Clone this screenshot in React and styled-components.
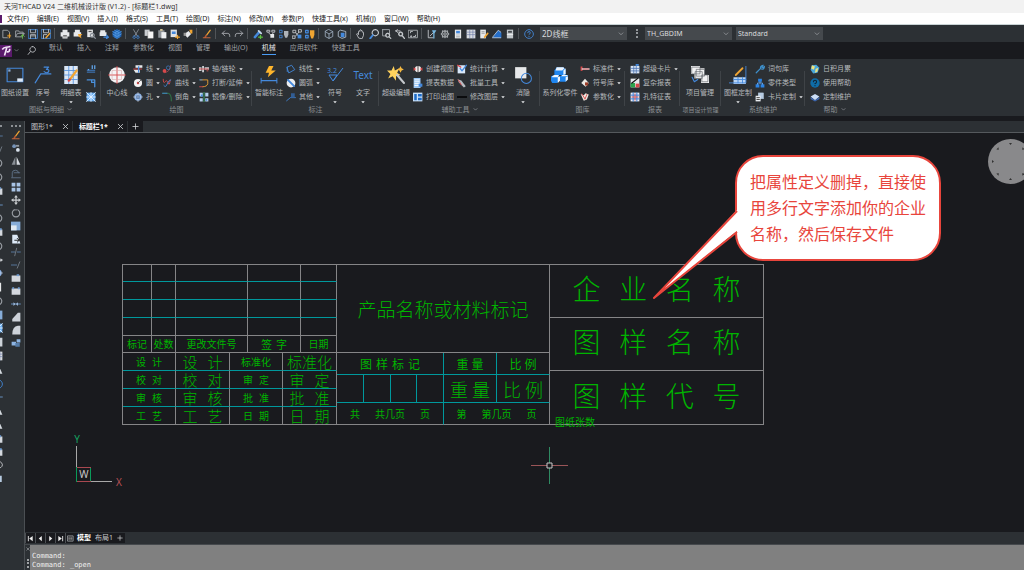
import React from 'react';
import styled, { createGlobalStyle } from 'styled-components';

const c = {
  dark: '#191a1e', bar: '#2c3034', field: '#45494d', text: '#b6b9bc', dim: '#8b8f93',
  blue: '#3b82d6', light: '#d5d8dc', red: '#e8453c', green: '#00b400', cyan: '#00989c', line: '#858587',
};
const sans = '"Noto Sans", "Noto Sans CJK SC", sans-serif';

const Global = createGlobalStyle`
  * { box-sizing: border-box; }
  body { margin: 0; background: ${c.dark}; font-family: ${sans}; overflow: hidden; }
  button { border: 0; padding: 0; background: none; color: inherit; font: inherit; display: flex; align-items: center; }
  svg { display: block; flex: none; }
`;

/* ---------- icons, all drawn on a 16 unit grid ---------- */
const L = ({ d, s = '#c3c7cb', w = 1.4, f = 'none' }) => (
  <path d={d} stroke={s} strokeWidth={w} fill={f} strokeLinecap="round" strokeLinejoin="round" />
);
const F = ({ d, f = '#e6e8ea' }) => <path d={d} fill={f} />;
const B = '#4489dc';
const O = '#f0a532';
const R = '#d8484a';

const glyphs = {
  newFile: <><L d="M2 2h7l3 3v9H2z" s="#a5a9ad" /><F d="M9 8h5v6H9z" f="#5a4322" /><L d="M12 8v6M9 11h5" s={O} /></>,
  openFile: <><L d="M1 12V3h5l1 2h6v3M1 12l3-5h11l-3 5z" s="#a0a5aa" /><L d="M9 12l3-3 3 3M12 9v6" s="#63b946" /></>,
  save: <><L d="M1 1h14v14H1z" s={B} /><L d="M4 1v5h8V1M4 15V9h8v6M5 11h6" s="#b3b8bd" /></>,
  saveAs: <><L d="M1 1h14v14H1z" s={B} /><L d="M4 1v5h8V1M4 15V9h5" /><L d="M8 14l6-7" s={O} w={2.4} /></>,
  print: <><F d="M4 1h8v4H4zM1 5h14v7h-3v3H4v-3H1z" /><F d="M5 10h6v1H5zM5 12h6v1H5z" f="#555" /></>,
  printPick: <><F d="M3 1h8v4H3zM1 5h12v7H1z" /><F d="M8 8h7l-3 3 2 4-5-3z" f={O} /></>,
  preview: <><F d="M2 1h9v12H2z" /><F d="M4 3h5v2H4z" f="#555" /><L d="M10 7a3 3 0 1 0 .1 0M12 12l3 3" s="#8b9198" w={2} /></>,
  publish: <><F d="M2 2h8v3H2zM1 5h11v6H1z" /><L d="M8 13h7M12 10l3 3-3 2" s={B} w={2} /></>,
  mesh: <><F d="M8 0l7 4v8l-7 4-7-4V4z" f="#1d5fae" /><L d="M1 4l7 4 7-4M8 8v8M1 8l7 4 7-4M4 2l7 4v8M12 2L5 6v8" s="#65aef5" w={0.9} /></>,
  cut: <><L d="M4 1l6 10M12 1L6 11" s="#8d949b" /><L d="M5 11a2 2 0 1 0 .1 0M11 11a2 2 0 1 0 .1 0" s={B} /></>,
  copy: <><F d="M1 1h8v10H1z" f="#c9cdd1" /><F d="M6 4h9v11H6z" f="#f4f4f4" /><L d="M6 4v11" s="#777" w={0.7} /></>,
  paste: <><F d="M2 2h10v12H2z" f="#8d9297" /><F d="M5 0h4v3H5z" f="#d1c39a" /><F d="M7 5h8v10H7z" f="#eceef0" /></>,
  pasteBlk: <><F d="M1 1h10v12H1z" f="#dfe2e5" /><F d="M3 4h6v4H3z" f={B} /><L d="M9 13h6M12 10v5" s={O} w={2} /></>,
  match: <><F d="M2 8l7-5 4 5-6 6z" f="#e9ebed" /><F d="M10 1h5v6h-3z" f={O} /><F d="M1 6h4v5H1z" f="#999" /></>,
  brush: <><L d="M13 2L7 10" s={O} w={2} /><L d="M7 10l-2 3" s="#b65a32" w={2.5} /><L d="M2 14h11" s="#d66c3b" /></>,
  undo: <L d="M6 3L2 7l4 4M2 7h9q3 0 3 4v1" s="#a9adb1" />,
  redo: <L d="M10 3l4 4-4 4M14 7H5q-3 0-3 4v1" s="#a9adb1" />,
  pick: <><L d="M3 13l7-8" s={B} w={4} /><L d="M9 3l4 4" s="#c6d6ea" w={3} /><L d="M9 13h6M12 10v6" s="#5cbf3d" w={2} /></>,
  nodes: <><L d="M2 2h4v3H2zM10 2h4v3h-4zM4 6l4 4 4-4" /><F d="M7 8h6v6H7z" /></>,
  bulbOff: <><L d="M1 2h4v4H1zM1 10h4v4H1z" s={B} /><F d="M8 3h7v6l-2 5h-3L8 9z" f="#aeb3b8" /></>,
  nodes2: <><L d="M2 2h4v4H2zM11 1h4v4h-4zM1 11h4v4H1zM6 6l5 6M11 5l-5 6" /><F d="M9 9h6v6H9z" f={B} /></>,
  bulbOn: <><L d="M1 2h4v4H1zM1 10h4v4H1z" s={B} w={2} /><F d="M8 2h7v7l-2 6h-3L8 9z" f={O} /></>,
  cube: <L d="M8 1l6 3v8l-6 3-6-3V4zM2 4l6 4 6-4M8 8v7" s="#9aa9ba" />,
  cubes: <><L d="M6 2l8 2v9l-6 2-6-3V5z" s="#aebdcc" /><F d="M6 6h6v7H6z" f={B} /></>,
  pan: <L d="M4 14L1 8q1-2 3 1V4q1-2 2 0V2q2-2 2 0v1q2-2 2 1v1q2-1 2 1v4l-2 5z" s="#c1c4c8" />,
  zoom: <><L d="M10 1a5 5 0 1 0 .1 0" w={1.8} /><L d="M6 10l-4 5" s={B} w={3} /></>,
  zoomWin: <><L d="M1 1h11v8M1 1v10h6" s="#a8adb2" /><L d="M9 7a3 3 0 1 0 .1 0M11 12l3 3" w={2} /></>,
  zoomPrev: <><L d="M1 3h7M5 6L1 3l3-2" /><L d="M9 5a3 3 0 1 0 .1 0M11 10l4 5" w={2.2} /></>,
  extent: <><L d="M1 2h14v12H1z" s="#aeb2b6" /><L d="M4 6V4h3M12 10v2H9M5 11a1 1 0 1 0 .1 0" /></>,
  axes: <><L d="M2 2v12h8M5 11l5-5" /><F d="M8 2h7l-3 5v8h-2V7z" f="#78b7e0" /></>,
  gear: <L d="M8 2l1 2 3-1v3l2 2-2 2v3l-3-1-1 2-1-2-3 1v-3L2 8l2-2V3l3 1zM8 6a2 2 0 1 0 .1 0" s="#a2a6aa" w={1.8} />,
  doc: <><F d="M3 1h10v14H3z" /><F d="M5 3h6v4H5z" f={B} /><F d="M5 9h6v1H5zM5 12h6v1H5z" f="#8a8f94" /></>,
  table: <><F d="M1 1h14v14H1z" f="#d9dce0" /><L d="M1 5h14M1 9h14M6 1v14M11 1v14" s="#6170a0" w={0.9} /></>,
  note: <><F d="M2 1h9v14H2z" /><F d="M4 4h5v1H4zM4 7h5v1H4z" f="#777" /><L d="M9 13l5-6" s={O} w={2.5} /></>,
  tri: <><F d="M1 14L10 2l5 4v8z" f="#256ec8" /><L d="M1 13l9-11 4 3M1 14h13" s="#b8cde6" /></>,
  calc: <><F d="M3 1h10v14H3z" f="#c1c6ca" /><F d="M5 3h6v3H5z" f="#44484c" /><F d="M3 8h10v1H3z" f="#fff" /></>,
  help: <><L d="M8 1a7 7 0 1 0 .1 0" s={B} /><L d="M6 6q0-2 2-2t2 2-2 3M8 12v.2" s={B} /></>,
  frame: <><L d="M1 2h14v12H1z" s={B} w={1} /><F d="M10 11h5v3h-5z" f="#dbe8f7" /><F d="M2 3h2v2H2z" f="#8aa9cf" /></>,
  balloon: <><L d="M1 15l5-8h9" s={B} w={1} /><L d="M9 1h4L11 3q3 0 2 2t-4 0" s={B} w={1} /></>,
  sheet: <><F d="M2 0h12v16H2z" f="#dce8f7" /><L d="M2 4h12M2 8h12M2 12h12M6 0v16M10 0v16" s="#5b95dc" w={0.8} /><L d="M7 12l6-8" s={O} w={2} /><L d="M6 13l1-1" s={R} w={2} /></>,
  part1: <><L d="M2 10h12M2 13h12" s={B} /><F d="M9 2h2v6H9zM13 2h2v6h-2zM3 8h2v2H3z" f="#61a5ec" /></>,
  part2: <><L d="M2 3h12v11M9 3v4h5" s="#4a90dc" w={2} /></>,
  part3: <><F d="M1 1h14v14H1z" f="#6fb2f4" /><L d="M1 1l14 14M15 1L1 15M8 1v14M1 8h14" s="#e7f2ff" /></>,
  center: <><circle cx="8" cy="8" r="7" fill="#f3f4f6" /><L d="M8 0v16M0 8h16" s={R} w={0.8} /><L d="M4 4h8v8H4z" s="#d8a5a5" w={0.5} /></>,
  line: <><F d="M4 2h11v4H4zM1 9h10v5H4z" /><L d="M1 8h13" s={R} /><L d="M9 4v9" s={B} w={2} /></>,
  circle: <><circle cx="8" cy="8" r="6.5" fill="#f3f3f4" /><circle cx="8" cy="8" r="2" fill={R} /><L d="M8 8l5-5" s="#555" /></>,
  hole: <><circle cx="8" cy="8" r="6" fill="#8fb3e4" /><circle cx="8" cy="8" r="3" fill="#2e568e" /><L d="M8 0v16M0 8h16" s="#d6deea" w={0.9} /></>,
  arc: <><L d="M14 2q-1 11-10 12" s="#9b4a50" /><circle cx="4" cy="11" r="3" fill={R} /><circle cx="10" cy="6" r="3" fill="none" stroke={B} /></>,
  curve: <><L d="M2 2q0 8 3 4t5 2 3-5" s={R} /><L d="M3 12q3 4 5-2t6-7" s={B} /></>,
  fillet: <><L d="M1 2h9q5 1 5 12" s="#2f6b44" w={2} /><L d="M1 2h7" s={B} /></>,
  shaft: <><F d="M0 5h4v6H0zM5 3h3v10H5zM9 5h7v4H9z" f="#c9ccd0" /><L d="M0 8h15" s={R} /><F d="M12 9h3v3h-3z" f="#8a4545" /></>,
  breakIc: <><L d="M2 3h12v6q-1 5-8 5" s={O} /><L d="M1 3h4" s={B} /><L d="M6 14H1" s={R} /></>,
  mirror: <><F d="M1 1h5v6H1zM10 1h5v6h-5zM1 10h5v5H1zM10 10h5v5h-5z" f="#b4d0ee" /><L d="M8 0v16" s="#40b070" /><F d="M3 4h3v3H3zM11 11h2v3h-2z" f={B} /></>,
  smart: <><F d="M8 0h4l-2 4h4L7 10l1-4H5z" f="#ffb52b" /><L d="M1 11v4M15 11v4M1 13h14" s={B} w={0.9} /></>,
  linear: <><L d="M2 5l7-3 5 7-9 5zM2 5v7" s={B} /></>,
  dia: <><circle cx="8" cy="8" r="7" fill="#eceef0" /><L d="M3 3l10 10" s={B} w={3} /></>,
  other: <><L d="M1 14l6-5h8" s={B} /><F d="M8 2h6v7H8z" f="#315d94" /></>,
  wand: <><F d="M6 0l1 4 4-2-2 4 3 2-4 1v4L5 9l-4 2 2-4L0 4l4 0z" f="#ffd25c" /><F d="M12 0l1 2 2 1-2 1-1 2-1-2-2-1 2-1z" f="#f5b942" /><L d="M9 8l6 7" s="#c5c8cc" w={2} /></>,
  view: <><circle cx="8" cy="8" r="5" fill="#f4eeee" /><F d="M1 5l4 3-4 3zM15 5l-4 3 4 3z" f={R} /><L d="M8 2v12" s="#333" /></>,
  extract: <><F d="M1 0h11v16H1z" f="#9cc7f4" /><L d="M3 3h7M3 6h7M3 9h7M3 12h7" s="#fff" /><F d="M9 9h6v5H9z" f={B} /></>,
  plot: <><F d="M0 1h15v14H0z" f="#cae2fb" /><F d="M2 3h4v10H2zM8 3h6v4H8zM8 9h6v4H8z" f="#1e6cc8" /></>,
  stat: <><F d="M1 2h12v13H1z" f="#d9e8fa" /><L d="M5 7l3 4 7-9" s={B} w={2} /><L d="M1 2l5 3" s={R} w={2} /></>,
  batch: <><F d="M1 2l6 2 7 9-3 2-8-8z" f="#b7bcc2" /><L d="M2 3l5 8" s={R} /></>,
  dash: <L d="M0 8h16" s="#0b0c0e" w={3} />,
  hide: <><F d="M1 1h10v10H1z" f="#e7e8ea" /><circle cx="11" cy="11" r="4.5" fill="none" stroke={B} strokeWidth="0.9" /></>,
  blocks: <>
    <F d="M5 1h6l2 2v5H3V4z" f="#1f86f0" /><F d="M0 9l3-1h4v6l-2 1H1L0 13z" f="#1f86f0" /><F d="M8 9l2-1h5v4l-2 2H8z" f="#1f86f0" />
    <F d="M5 1h6l1 1-2 2H4zM11 4l2-2v5l-2 1zM1 9l2-1h4l-1 2H1zM6 10l2-1v4l-2 2zM9 9l1-1h5l-1 1zM13 10l2-1v3l-2 2z" f="#eef5fd" />
  </>,
  bolt: <><F d="M1 4h3v7H1z" f={R} /><L d="M4 8h10" s="#c5c8cc" w={3} /><L d="M5 8h9" s={R} /></>,
  symbol: <><F d="M8 1l6 7-5 6-7-6z" f="#ece9e4" /><F d="M8 7h5v5H8z" f="#9c3d28" /></>,
  param: <><F d="M1 3l5 2 3-3 5 2-3 8-5 2z" f="#eee9e1" /><L d="M3 3l5 8M11 4l-3 7" s={R} /></>,
  card: <><F d="M1 3h14v12H1z" f="#d9e5f5" /><L d="M1 7h14M1 11h14M6 3v12M10 3v12" s="#476fae" w={1.2} /><F d="M9 0h5v3H9z" f={B} /></>,
  report: <><F d="M1 1h14v14H1z" f="#e6e9ed" /><F d="M1 8h7v7H1z" f="#2da44d" /><F d="M9 9h6v6H9z" f={R} /><L d="M3 8L12 1" s="#111" w={2} /></>,
  feature: <><F d="M1 1h14v14H1z" f="#e9effa" /><L d="M1 5h14M1 11h14M5 1v14M11 1v14" s="#3f7dd0" w={1.6} /><L d="M8 3v10M3 8h10" s={R} /></>,
  project: <>
    <F d="M0 0h8v7H0zM5 2h7v7H5zM3 5h7v6H3zM9 8h7v7H9z" f="#f2f2f3" />
    <L d="M1 1h7v6H1zM5 3h7v6H5zM4 5h6v6H4zM10 8h5v6h-5z" s="#63676b" w={0.6} /><L d="M1 10l2 4 3-2" s={B} w={1} />
  </>,
  custom: <><F d="M4 10h11v6H4z" f="#b8d4f5" /><L d="M0 15h15V0M4 12h11M8 10v5M12 10v5" s={B} w={0.8} /><L d="M6 8l6-6" s={O} w={1.6} /></>,
  wrench: <L d="M2 14l7-7q-1-4 4-5l-2 3 2 1 2-2q0 5-5 4" s="#3e8fca" w={2} />,
  types: <><F d="M5 1h6v5H5zM1 10h6v5H1zM9 10h6v5H9z" f="#2b83e5" /><L d="M8 6v2M4 10V8h8v2" s="#69adf4" /></>,
  cardSet: <><F d="M5 1h9v10H5z" f="#b7cbe1" /><F d="M1 6h8v9H1z" f="#e9ecf0" /><L d="M3 9h4M3 12h4" s="#333" /></>,
  tip: <><F d="M3 2l7-1 5 5-3 8-7 1-4-6z" f="#49a6d9" /><F d="M3 2l5 2-2 5-4-2zM9 8l4-2-1 6-4 2z" f="#eee17b" /></>,
  helpFill: <><circle cx="8" cy="8" r="7.5" fill="#0f6da8" /><L d="M5.500 6q0-2.500 2.500-2.500T10.500 6 8 9M8 12v.3" s="#112636" w={1.8} /></>,
  book: <><F d="M1 7l7-4 7 4-7 6z" f="#c9dcf5" /><F d="M1 8l7 5 7-5v3l-7 4-7-4z" f="#3d68b3" /></>,
  mCopy: <><circle cx="5" cy="5" r="3" fill="#7693b8" /><circle cx="11" cy="11" r="3" fill="#d9e2ec" /><F d="M8 3h5v3H8z" f="#90979e" /></>,
  mMirror: <><F d="M7 1v13H1z" f="#888e95" /><F d="M9 1v13h6z" f="#d5dae0" /></>,
  mOffset: <><L d="M1 14h14M2 13V6q0-4 5-4t5 4M5 6h9" s="#60738a" /></>,
  mArray: <F d="M1 1h6v6H1zM9 1h6v6H9zM1 9h6v6H1zM9 9h6v6H9z" f="#a9c4e6" />,
  mMove: <F d="M8 0l3 4H9v3h3V5l4 3-4 3V9H9v3h2l-3 4-3-4h2V9H4v2L0 8l4-3v2h3V4H5z" f="#c9ccd0" />,
  mRotate: <><L d="M5 3a6 6 0 1 0 6 0" s="#9a9fa5" w={1.8} /><L d="M5 3h4" s="#9a9fa5" /></>,
  mScale: <><F d="M0 1h15v14H0z" f="#86acd8" /><F d="M0 7h9v8H0z" f="#dfe8f2" /></>,
  mStretch: <><F d="M2 1h8l5 14H2z" f="#dce9f7" /><L d="M6 10h7M10 7l3 3-3 3" s="#111" /></>,
  mTrim: <><L d="M0 8h6M10 8h5" s="#5b7fa8" /><L d="M9 2l-3 12" s="#77808a" /></>,
  mExtend: <><L d="M0 8h9" s="#5b7fa8" /><L d="M14 3l-4 10" s="#77808a" /></>,
  mBox: <><F d="M1 4h14v10H1z" f="#d4d8de" /><F d="M9 2h4v3H9z" f="#6f9bd0" /></>,
  mBox2: <><F d="M1 4h14v10H1z" f="#d4d8de" /><F d="M2 2h3v3H2zM11 2h3v3h-3z" f="#6f9bd0" /></>,
  mJoin: <><L d="M0 8h15" s="#6f9bd0" /><F d="M4 5l3 3-3 3zM11 5L8 8l3 3z" f="#a5c1e4" /></>,
  mCham: <F d="M2 15V11L11 1h4v14z" f="#cdd2d9" />,
  mFil: <F d="M2 15Q2 2 11 1h4v14z" f="#cdd2d9" />,
  mExpl: <><F d="M1 6h7v6H1zM9 2h6v5H9z" f="#8db4e2" /><F d="M7 8h7v6H7z" f="#567ca8" /></>,
  close: <L d="M3 3l10 10M13 3L3 13" s="#c4c7ca" w={2} />,
  plus: <L d="M8 2v12M2 8h12" s="#d5d7da" w={1.8} />,
  first: <F d="M2 2h2v12H2zM13 2v12L5 8z" f="#eee" />,
  prev: <F d="M11 2v12L4 8z" f="#eee" />,
  next: <F d="M5 2v12l7-6z" f="#eee" />,
  last: <F d="M12 2h2v12h-2zM3 2v12l8-6z" f="#eee" />,
  list: <><L d="M2 2h12v12H2z" /><L d="M5 5h6v6H5zM5 8h6" s="#999" /></>,
  chevron: <L d="M3 5l5 5 5-5" s="#a6aaae" w={1.8} />,
  drop: <F d="M1 5h14L8 13z" f="#e8eaec" />,
  search: <L d="M10 1a5 5 0 1 0 .1 0M6 10l-4 5" s="#c6c9cc" w={1.5} />,
  logo: <><F d="M0 0h16v16H0z" f="#5a1a6b" /><path d="M3 6q2-3 5-3t6-1M9 4L6 14M9 9q4 1 4-4" stroke="#f3e5f7" strokeWidth="2.2" fill="none" /></>,
};

const Icon = ({ name, size = 10 }) => (
  <svg width={size} height={size} viewBox="0 0 16 16" aria-hidden="true">{glyphs[name]}</svg>
);

/* ---------- frame ---------- */
const Page = styled.div`min-height: 100vh; display: flex; flex-direction: column; font-size: 7px; line-height: 10px; color: ${c.text};`;
const TitleBar = styled.header`height: 13px; padding: 2px 4px; background: #f2f2f2; color: #333; white-space: nowrap;`;
const MenuBar = styled.nav`
  height: 12px; padding-left: 7px; display: flex; align-items: center; gap: 8px;
  background: #fff; color: #222; border-bottom: 1px solid #c9d3d5; white-space: nowrap; position: relative;
`;
const AppMark = styled.span`position: absolute; left: 0; top: 2px; width: 2px; height: 8px; background: #5a1a6b;`;
const QuickBar = styled.div`height: 17px; display: flex; align-items: center; background: ${c.bar};`;
const ToolGroup = styled.div`display: flex; & + &::before { content: ''; width: 1px; height: 11px; margin: 1px 3px 0 2px; background: #505458; }`;
const ToolButton = styled.button`width: 13px; height: 13px; justify-content: center;`;
const SelectWrap = styled.label`position: relative; width: ${(p) => p.$w}px; margin-left: ${(p) => p.$gap}px; & > svg { position: absolute; right: 3px; top: 4px; }`;
const Select = styled.select`
  appearance: none; display: block; width: 100%; height: 13px; border: 0; border-radius: 0; padding: 0 2px;
  background: ${c.field}; color: #d9dbdd; font: ${(p) => p.$size}px/13px ${sans};
`;
const Grip = styled.span`width: 0; height: 9px; margin-left: 9px; border-left: 2px dotted #92969a;`;

const TabBar = styled.nav`height: 17px; display: flex; align-items: flex-start; background: ${c.dark};`;
const Brand = styled.button`width: 25px; height: 17px; gap: 2px; `;
const SearchButton = styled.button`width: 24px; height: 17px; padding-left: 2px;`;
const TabList = styled.div`display: flex; gap: 14px; white-space: nowrap;`;
const RibbonTab = styled.button`
  height: 13px; line-height: 12px; color: ${(p) => (p.$on ? '#e6e7e8' : '#a0a3a6')};
  border-bottom: 1px solid ${(p) => (p.$on ? '#4a9cf5' : 'transparent')};
`;

const Ribbon = styled.div`height: 57px; display: flex; background: ${c.bar}; white-space: nowrap;`;
const Group = styled.section`
  display: flex; flex-direction: column; position: relative; padding-left: ${(p) => p.$pad || 0}px;
  &:not(:last-child)::after { content: ''; position: absolute; right: 0; top: 12px; height: 35px; width: 1px; background: #3f4347; }
`;
const GroupBody = styled.div`height: 45px; padding-top: 3px; padding-right: 1px; display: flex;`;
const GroupName = styled.div`display: flex; justify-content: center; align-items: center; gap: 3px; height: 11px; color: ${c.dim}; font-size: ${(p) => (p.$tight ? 6 : 7)}px;`;
const BigButton = styled.button`
  width: ${(p) => p.$w}px; flex-direction: column; justify-content: flex-start; padding-top: 3px; gap: 3px; line-height: 9px;
`;
const BigArt = styled.span`height: 20px; display: flex; align-items: center; color: ${B}; font-size: 10px;`;
const Column = styled.div`width: ${(p) => p.$w}px; display: flex; flex-direction: column;`;
const SmallButton = styled.button`height: 14px; gap: 3px;`;

const RibbonEdge = styled.div`height: 5px; background: ${c.dark};`;

const Workspace = styled.div`flex: 1; display: flex; min-height: 0;`;
const Dock = styled.aside`width: 25px; display: flex; justify-content: space-between; background: ${c.bar}; border-right: 1px solid #4b4f53; padding: 4px 3px 0 0;`;
const Tools = styled.div`
  display: flex; flex-direction: column; justify-content: space-between; align-items: flex-end; overflow: hidden;
  width: ${(p) => p.$w}px; height: ${(p) => p.$h}px;
`;
const DockGrip = styled.span`width: 100%; height: 2px; border-top: 2px dotted #8d9195;`;
const Pane = styled.main`flex: 1; min-width: 0; display: flex; flex-direction: column;`;
const DocTabs = styled.div`height: 12px; display: flex; gap: 1px; background: ${c.bar}; border-bottom: 1px solid #55595d;`;
const DocTab = styled.button`
  height: 11px; padding: 0 3px 0 6px; gap: 9px; background: ${c.dark}; color: ${(p) => (p.$on ? '#fff' : '#c8cacc')};
  font-weight: ${(p) => (p.$on ? 700 : 400)};
`;
const AddTab = styled.button`width: 15px; height: 11px; justify-content: center; background: ${c.dark};`;

/* ---------- drawing ---------- */
const Canvas = styled.div`flex: 1; position: relative; overflow: hidden; background: ${c.dark};`;
const Placed = styled.div`position: absolute; left: ${(p) => p.$x}px; top: ${(p) => p.$y}px;`;
const TitleBlock = styled(Placed)`
  display: flex; border-left: 1px solid ${c.line}; border-top: 1px solid ${c.line};
  color: ${c.green}; font-family: "Noto Sans CJK SC", sans-serif; white-space: nowrap;
`;
const Sheet = styled.div`display: grid; grid-template-columns: ${(p) => p.$cols}; grid-template-rows: ${(p) => p.$rows || 'none'};`;
const Cell = styled.div`
  display: flex; align-items: center; justify-content: center; line-height: 1; font-size: ${(p) => p.$size || 11}px;
  font-weight: ${(p) => (p.$size > 12 ? 300 : 400)}; padding-bottom: ${(p) => (p.$size > 20 ? 6 : 0)}px;
  border-right: 1px solid ${(p) => (p.$r ? c.cyan : c.line)}; border-bottom: 1px solid ${(p) => (p.$b ? c.cyan : c.line)};
`;
const SpreadBox = styled.span`display: flex; justify-content: space-between; width: ${(p) => p.$w}px;`;
const Spread = ({ w, children }) => <SpreadBox $w={w}>{[...children].map((ch, i) => <span key={i}>{ch}</span>)}</SpreadBox>;
const Overhang = styled.span`position: absolute; right: 169px; bottom: -3px; font-size: 10px; line-height: 12px;`;
const Words = styled.span`display: flex; gap: ${(p) => p.$gap}px;`;

const Bubble = styled(Placed)`
  padding: 11px 12px 13px 13px; border: 2px solid ${c.red}; border-radius: 28px; background: #fff; color: ${c.red};
  font: 400 16px/26px "Noto Sans CJK SC", sans-serif; white-space: nowrap; width: 206px;
`;
const Compass = styled.div`position: absolute; right: -9px; top: 6px;`;

const LayoutTabs = styled.div`height: 12px; display: flex; align-items: center; background: ${c.bar};`;
const NavButton = styled.button`width: 10px; height: 10px; justify-content: center; background: ${c.dark}; border-left: 1px solid #4b4f53;`;
const LayoutTab = styled.button`height: 10px; padding: 0 2px; background: ${c.dark}; color: ${(p) => (p.$on ? '#fff' : '#c8cacc')}; font-weight: ${(p) => (p.$on ? 700 : 400)};`;
const Command = styled.div`height: 26px; display: flex; background: ${c.bar}; border-top: 1px solid #45494d;`;
const CommandSide = styled.div`width: 5px; display: flex; flex-direction: column; justify-content: space-between; align-items: center; padding: 2px 0;`;
const SideGrip = styled.span`height: 9px; border-left: 2px dotted #a0a3a6;`;
const Log = styled.div`flex: 1; padding: 7px 2px 0; background: #808080; color: #f0f0f0; font: 7px/9px "DejaVu Sans Mono", monospace;`;

const quick = [
  ['newFile', 'openFile', 'save', 'saveAs'],
  ['print', 'printPick', 'preview', 'publish', 'mesh'],
  ['cut', 'copy', 'paste', 'pasteBlk', 'match'],
  ['brush'], ['undo', 'redo'],
  ['pick', 'nodes', 'bulbOff', 'nodes2', 'bulbOn'],
  ['cube', 'cubes'],
  ['pan', 'zoom', 'zoomWin', 'zoomPrev', 'extent'],
  ['axes', 'gear', 'doc', 'table', 'note', 'tri', 'calc'],
  ['help'],
];
const menus = ['文件(F)', '编辑(E)', '视图(V)', '插入(I)', '格式(S)', '工具(T)', '绘图(D)', '标注(N)', '修改(M)', '参数(P)', '快捷工具(x)', '机械(J)', '窗口(W)', '帮助(H)'];
const tabs = ['默认', '插入', '注释', '参数化', '视图', '管理', '输出(O)', '机械', '应用软件', '快捷工具'];

const big = (w, icon, label, drop, text) => ({ w, icon, label, drop, text });
const col = (w, ...rows) => ({ w, rows });
const groups = [
  { name: '图纸与明细', more: true, items: [big(30, 'frame', '图纸设置'), big(26, 'balloon', '序号', true), big(30, 'sheet', '明细表', true), col(14, ['part1'], ['part2'], ['part3'])] },
  { name: '绘图', items: [big(32, 'center', '中心线'), col(29, ['line', '线', 1], ['circle', '圆', 1], ['hole', '孔', 1]), col(37, ['arc', '圆弧', 1], ['curve', '曲线', 1], ['fillet', '倒角', 1]), col(52, ['shaft', '轴/链轮', 1], ['breakIc', '打断/延伸', 1], ['mirror', '镜像/删除', 1])] },
  { name: '标注', items: [big(34, 'smart', '智能标注'), col(36, ['linear', '线性', 1], ['dia', '圆弧', 1], ['other', '其他', 1]), big(26, 'surf', '符号', true), big(30, null, '文字', true, 'Text')] },
  { name: '辅助工具', more: true, items: [big(34, 'wand', '超级编辑'), col(44, ['view', '创建视图'], ['extract', '提表数据'], ['plot', '打印出图', 1]), col(50, ['stat', '统计计算', 1], ['batch', '批量工具', 1], ['dash', '修改图层', 1]), big(32, 'hide', '消隐', true)] },
  { name: '图库', items: [big(40, 'blocks', '系列化零件'), col(44, ['bolt', '标准件', 1], ['symbol', '符号库', 1], ['param', '参数化', 1])] },
  { name: '报表', pad: 5, items: [col(49, ['card', '超级卡片', 1], ['report', '复杂报表'], ['feature', '孔特征表'])] },
  { name: '项目设计管理', tight: true, items: [big(40, 'project', '项目管理')] },
  { name: '系统维护', items: [big(34, 'custom', '图框定制', true), col(49, ['wrench', '词句库'], ['types', '零件类型'], ['cardSet', '卡片定制', 1])] },
  { name: '帮助', more: true, pad: 5, items: [col(48, ['tip', '日积月累'], ['helpFill', '使用帮助'], ['book', '定制维护'])] },
];

const modify = ['brush', 'mCopy', 'mMirror', 'mOffset', 'mArray', 'mMove', 'mRotate', 'mScale', 'mStretch', 'mTrim', 'mExtend', 'mBox', 'mBox2', 'mJoin', 'mCham', 'mFil', 'mExpl'];
const draw = ['mTrim', 'mExtend', 'mRotate', 'mRotate', 'mBox', 'mJoin', 'mRotate', 'mBox2', 'mRotate', 'mMove', 'hole', 'doc', 'mRotate', 'mScale', 'part3', 'mFil', 'table', 'mMirror', 'help', 'mJoin', 'mMirror', 'mMirror', 'mBox', 'mBox2', 'search', 'cardSet'];

const rowsLeft = [
  ['设计', '设计', '标准化', '标准化'],
  ['校对', '校对', '审定', '审定'],
  ['审核', '审核', '批准', '批准'],
  ['工艺', '工艺', '日期', '日期'],
];

function RibbonItem({ item }) {
  if (item.rows) {
    return (
      <Column $w={item.w}>
        {item.rows.map(([icon, label, drop]) => (
          <SmallButton key={icon} aria-label={label || icon}>
            <Icon name={icon} />{label && <span>{label}</span>}{drop && <Icon name="drop" size={4} />}
          </SmallButton>
        ))}
      </Column>
    );
  }
  return (
    <BigButton $w={item.w}>
      <BigArt>
        {item.icon === 'surf' ? (
          <svg width="20" height="20" viewBox="0 0 20 20" aria-hidden="true">
            <path d="M4 10h8l-4 6-4-6M8 16L18 3" fill="none" stroke={B} />
            <text x="2" y="8" fontSize="7" fill={B} fontFamily="Noto Sans">3.2</text>
          </svg>
        ) : item.icon ? <Icon name={item.icon} size={18} /> : item.text}
      </BigArt>
      <span>{item.label}</span>
      {item.drop && <Icon name="drop" size={4} />}
    </BigButton>
  );
}

function TitleBlockDrawing() {
  return (
    <TitleBlock $x={97} $y={131}>
      <div>
        <Sheet $cols="29px 24px 72px 53px 36px" $rows="17px 18px 18px 18px 17px">
          {Array.from({ length: 20 }, (_, i) => <Cell key={i} $b={i < 15} />)}
          <Cell $size={10}>标记</Cell><Cell $size={10}>处数</Cell><Cell $size={10}>更改文件号</Cell>
          <Cell $size={11}><Spread w={26}>签字</Spread></Cell><Cell $size={10}>日期</Cell>
        </Sheet>
        <Sheet $cols="53px 54px 53px 54px" $rows="repeat(4, 18px)">
          {rowsLeft.map((row, r) => row.map((t, i) => (
            <Cell key={`${r}${i}`} $b={r < 3} $size={i % 2 ? 15 : 10}>
              {t.length === 3 ? t : <Spread w={i % 2 ? 40 : 26}>{t}</Spread>}
            </Cell>
          )))}
        </Sheet>
      </div>
      <div>
        <Sheet $cols="213px" $rows="88px"><Cell $size={19}>产品名称或材料标记</Cell></Sheet>
        <Sheet $cols="107px 53px 53px" $rows="22px">
          <Cell $r $b $size={12}><Spread w={60}>图样标记</Spread></Cell>
          <Cell $r $b $size={12}><Spread w={27}>重量</Spread></Cell>
          <Cell $b $size={12}><Spread w={27}>比例</Spread></Cell>
        </Sheet>
        <Sheet $cols="27px 27px 26px 27px 53px 53px" $rows="28px">
          <Cell $r $b /><Cell $r $b /><Cell $r $b /><Cell $r $b />
          <Cell $r $b $size={18}><Spread w={40}>重量</Spread></Cell>
          <Cell $b $size={18}><Spread w={40}>比例</Spread></Cell>
        </Sheet>
        <Sheet $cols="107px 106px" $rows="22px">
          <Cell $r $size={10}><Words $gap={15}><span>共</span><span>共几页</span><span>页</span></Words></Cell>
          <Cell $size={10}><Words $gap={15}><span>第</span><span>第几页</span><span>页</span></Words></Cell>
        </Sheet>
      </div>
      <Sheet $cols="214px" $rows="53px 53px 54px">
        {['企业名称', '图样名称', '图样代号'].map((t) => <Cell key={t} $size={28}><Spread w={168}>{t}</Spread></Cell>)}
      </Sheet>
      <Overhang>图纸张数</Overhang>
    </TitleBlock>
  );
}

export default function App() {
  return (
    <Page>
      <Global />
      <TitleBar>天河THCAD V24 二维机械设计版 (V1.2) - [标题栏1.dwg]</TitleBar>
      <MenuBar><AppMark />{menus.map((m) => <button key={m}>{m}</button>)}</MenuBar>
      <QuickBar>
        {quick.map((g, i) => (
          <ToolGroup key={i}>{g.map((n) => <ToolButton key={n} aria-label={n}><Icon name={n} /></ToolButton>)}</ToolGroup>
        ))}
        <SelectWrap $w={87} $gap={5}><Select $size={8} aria-label="视觉样式"><option>2D线框</option></Select><Icon name="chevron" size={6} /></SelectWrap>
        <Grip />
        <SelectWrap $w={87} $gap={7}><Select $size={7} aria-label="标注样式"><option>TH_GBDIM</option></Select><Icon name="chevron" size={6} /></SelectWrap>
        <SelectWrap $w={87} $gap={4}><Select $size={7} aria-label="文字样式"><option>Standard</option></Select><Icon name="chevron" size={6} /></SelectWrap>
      </QuickBar>
      <TabBar>
        <Brand aria-label="THCAD"><Icon name="logo" size={12} /><Icon name="chevron" size={5} /></Brand>
        <SearchButton aria-label="搜索"><Icon name="search" size={9} /></SearchButton>
        <TabList>{tabs.map((t) => <RibbonTab key={t} $on={t === '机械'}>{t}</RibbonTab>)}</TabList>
      </TabBar>
      <Ribbon>
        {groups.map((g) => (
          <Group key={g.name} $pad={g.pad}>
            <GroupBody>{g.items.map((it, i) => <RibbonItem key={i} item={it} />)}</GroupBody>
            <GroupName $tight={g.tight}>{g.name}{g.more && <Icon name="chevron" size={5} />}</GroupName>
          </Group>
        ))}
      </Ribbon>
      <RibbonEdge />
      <Workspace>
        <Dock>
          <Tools $w={3} $h={360}><DockGrip />{draw.map((n, i) => <Icon key={i} name={n} />)}</Tools>
          <Tools $w={10} $h={223}><DockGrip />{modify.map((n) => <Icon key={n} name={n} />)}</Tools>
        </Dock>
        <Pane>
          <DocTabs>
            <DocTab><span>图形1*</span><Icon name="close" size={7} /></DocTab>
            <DocTab $on><span>标题栏1*</span><Icon name="close" size={7} /></DocTab>
            <AddTab aria-label="新建"><Icon name="plus" size={7} /></AddTab>
          </DocTabs>
          <Canvas>
            <TitleBlockDrawing />
            <Placed $x={44} $y={298}>
              <svg width="60" height="60" viewBox="0 0 60 60">
                <g fill="none" strokeWidth="1">
                  <path d="M7.500 15v21M22 50.500h21" stroke="#a8a8a8" />
                  <path d="M7.500 36v15M21.500 36v15" stroke="#0a9a5a" />
                  <path d="M8 36.500h14M8 50.500h14" stroke="#a84850" />
                </g>
                <g fontFamily="Noto Sans" fontSize="10" textAnchor="middle">
                  <text x="8" y="12" fill="#15a060">Y</text>
                  <text x="50" y="55" fill="#b85055">X</text>
                  <text x="15" y="47" fontSize="10" fill="#c8c8c8">W</text>
                </g>
              </svg>
            </Placed>
            <Placed $x={506} $y={314}>
              <svg width="38" height="38" viewBox="0 0 38 38" fill="none">
                <path d="M0 18.500h16M21 18.500h16" stroke="#9a5558" />
                <path d="M18.500 0v16M18.500 21v16" stroke="#2f8a62" />
                <path d="M16 16h5v5h-5z" stroke="#c8c8c8" />
              </svg>
            </Placed>
            <Compass>
              <svg width="45" height="45" viewBox="0 0 45 45">
                <circle cx="22.500" cy="22.500" r="22.500" fill="#89898b" />
                {[0, 45, 90, 135, 180, 225, 270, 315].map((a) => (
                  <path key={a} d="M21 4h3l-1.500 2z" fill="#333" transform={`rotate(${a} 22.500 22.500)`} />
                ))}
              </svg>
            </Compass>
            <Bubble $x={710} $y={22}>把属性定义删掉，直接使<br />用多行文字添加你的企业<br />名称，然后保存文件</Bubble>
            <Placed $x={626} $y={74}>
              <svg width="90" height="94" viewBox="0 0 90 94">
                <path d="M89 3h-3L3 91l83-67h3z" fill="#fff" />
                <path d="M86 4L3 91l83-66" fill="none" stroke={c.red} strokeWidth="2" strokeLinejoin="round" />
              </svg>
            </Placed>
          </Canvas>
          <LayoutTabs>
            {['first', 'prev', 'next', 'last', 'list'].map((n) => <NavButton key={n} aria-label={n}><Icon name={n} size={7} /></NavButton>)}
            <LayoutTab $on>模型</LayoutTab><LayoutTab>布局1</LayoutTab><LayoutTab aria-label="新建布局"><Icon name="plus" size={6} /></LayoutTab>
          </LayoutTabs>
          <Command>
            <CommandSide><Icon name="close" size={4} /><SideGrip /></CommandSide>
            <Log><div>Command:</div><div>Command: _open</div></Log>
          </Command>
        </Pane>
      </Workspace>
    </Page>
  );
}
